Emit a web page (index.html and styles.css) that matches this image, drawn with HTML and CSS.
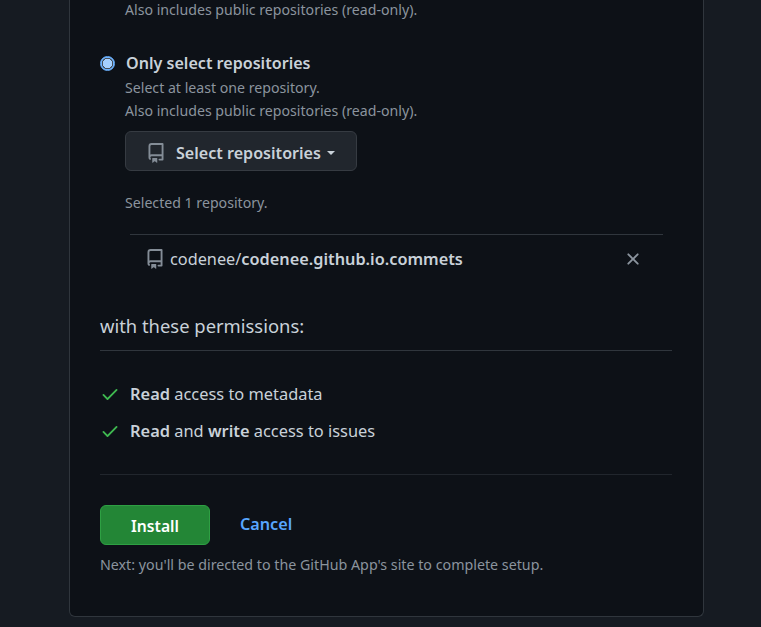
FILE: index.html
```html
<!DOCTYPE html>
<html lang="en">
<head>
    <meta charset="UTF-8">
    <title>Install GitHub App</title>
    <link rel="stylesheet" href="styles.css">
</head>
<body>
    <div class="card">
        <div class="note first-note">Also includes public repositories (read-only).</div>

        <div class="radio-row">
            <span class="radio"></span>
            <span class="radio-title">Only select repositories</span>
        </div>
        <div class="radio-body">
            <div class="note">Select at least one repository.</div>
            <div class="note">Also includes public repositories (read-only).</div>
            <button class="select-button">
                <svg class="repo-icon" viewBox="0 0 16 16"><path d="M2 2.5A2.5 2.5 0 0 1 4.5 0h8.75a.75.75 0 0 1 .75.75v12.5a.75.75 0 0 1-.75.75h-2.5a.75.75 0 0 1 0-1.5h1.75v-2h-8a1 1 0 0 0-.714 1.7.75.75 0 1 1-1.072 1.05A2.495 2.495 0 0 1 2 11.5Zm10.5-1h-8a1 1 0 0 0-1 1v6.708A2.486 2.486 0 0 1 4.5 9h8ZM5 12.25a.25.25 0 0 1 .25-.25h3.5a.25.25 0 0 1 .25.25v3.25a.25.25 0 0 1-.4.2l-1.45-1.087a.249.249 0 0 0-.3 0L5.4 15.7a.25.25 0 0 1-.4-.2Z"></path></svg>
                Select repositories
                <span class="caret"></span>
            </button>
            <div class="note selected-note">Selected 1 repository.</div>
            <div class="repo-row">
                <svg class="repo-icon" viewBox="0 0 16 16"><path d="M2 2.5A2.5 2.5 0 0 1 4.5 0h8.75a.75.75 0 0 1 .75.75v12.5a.75.75 0 0 1-.75.75h-2.5a.75.75 0 0 1 0-1.5h1.75v-2h-8a1 1 0 0 0-.714 1.7.75.75 0 1 1-1.072 1.05A2.495 2.495 0 0 1 2 11.5Zm10.5-1h-8a1 1 0 0 0-1 1v6.708A2.486 2.486 0 0 1 4.5 9h8ZM5 12.25a.25.25 0 0 1 .25-.25h3.5a.25.25 0 0 1 .25.25v3.25a.25.25 0 0 1-.4.2l-1.45-1.087a.249.249 0 0 0-.3 0L5.4 15.7a.25.25 0 0 1-.4-.2Z"></path></svg>
                <span class="repo-name">codenee/<strong>codenee.github.io.commets</strong></span>
                <svg class="remove-icon" viewBox="0 0 16 16"><path d="M3.72 3.72a.75.75 0 0 1 1.06 0L8 6.94l3.22-3.22a.749.749 0 0 1 1.275.326.749.749 0 0 1-.215.734L9.06 8l3.22 3.22a.749.749 0 0 1-.326 1.275.749.749 0 0 1-.734-.215L8 9.06l-3.22 3.22a.751.751 0 0 1-1.042-.018.751.751 0 0 1-.018-1.042L6.94 8 3.72 4.78a.75.75 0 0 1 0-1.06Z"></path></svg>
            </div>
        </div>

        <h2 class="section-title">with these permissions:</h2>
        <ul class="permissions">
            <li>
                <svg class="check-icon" viewBox="0 0 16 16"><path d="M13.78 4.22a.75.75 0 0 1 0 1.06l-7.25 7.25a.75.75 0 0 1-1.06 0L2.22 9.28a.751.751 0 0 1 .018-1.042.751.751 0 0 1 1.042-.018L6 10.94l6.72-6.72a.75.75 0 0 1 1.06 0Z"></path></svg>
                <span><strong>Read</strong> access to metadata</span>
            </li>
            <li>
                <svg class="check-icon" viewBox="0 0 16 16"><path d="M13.78 4.22a.75.75 0 0 1 0 1.06l-7.25 7.25a.75.75 0 0 1-1.06 0L2.22 9.28a.751.751 0 0 1 .018-1.042.751.751 0 0 1 1.042-.018L6 10.94l6.72-6.72a.75.75 0 0 1 1.06 0Z"></path></svg>
                <span><strong>Read</strong> and <strong>write</strong> access to issues</span>
            </li>
        </ul>

        <div class="actions">
            <button class="install-button">Install</button>
            <a class="cancel-link" href="#">Cancel</a>
        </div>
        <div class="note next-note">Next: you'll be directed to the GitHub App's site to complete setup.</div>
    </div>
</body>
</html>
```

FILE: styles.css
```css
html, body {
    height: 627px;
    overflow: hidden;
}
body {
    margin: 0;
    background: #161b22;
    color: #c9d1d9;
    font-family: 'Noto Sans', sans-serif;
    font-size: 16px;
}
strong {
    font-weight: 600;
}
.card {
    box-sizing: border-box;
    width: 635px;
    height: 617px;
    margin-left: 69px;
    padding: 0 31px 0 30px;
    background: #0d1117;
    border: 1px solid #30363d;
    border-top: none;
    border-radius: 0 0 6px 6px;
}
.note {
    color: #8b949e;
    font-size: 14.15px;
    line-height: 23px;
    white-space: nowrap;
}
.first-note {
    line-height: 19px;
    margin-left: 25px;
}
.radio-row {
    display: flex;
    align-items: center;
    height: 24px;
    margin-top: 32px;
}
.radio {
    box-sizing: border-box;
    width: 15px;
    height: 15px;
    margin-right: 11px;
    border-radius: 50%;
    border: 1px solid #6cb2ff;
    background: radial-gradient(circle, #a5d0ff 0 4.5px, #484f58 5px 5.5px, #6cb2ff 6px);
}
.radio-title {
    font-size: 16.1px;
    font-weight: 600;
    color: #c9d1d9;
}
.radio-body {
    padding-top: 1px;
    padding-left: 25px;
}
.select-button {
    display: flex;
    align-items: center;
    box-sizing: border-box;
    width: 232px;
    height: 40px;
    margin-top: 9px;
    padding: 3px 0 0 20px;
    background: #21262d;
    border: 1px solid #363b42;
    border-radius: 6px;
    color: #c9d1d9;
    font-family: inherit;
    font-size: 16.1px;
    font-weight: 600;
    white-space: nowrap;
}
.select-button .repo-icon {
    margin-right: 10px;
}
.repo-icon {
    width: 20px;
    height: 20px;
    fill: #848d97;
    flex: none;
}
.caret {
    width: 0;
    height: 0;
    margin-left: 6px;
    border: 4.5px solid transparent;
    border-top-color: #c9d1d9;
    border-bottom: none;
}
.selected-note {
    margin-top: 20px;
}
.repo-row {
    display: flex;
    align-items: center;
    height: 47px;
    margin: 20px 9px 0 5px;
    padding: 0 20px 0 15px;
    border-top: 1px solid #30363d;
}
.repo-name {
    flex: 1;
    margin-left: 5px;
    font-size: 16.3px;
    color: #c9d1d9;
}
.remove-icon {
    width: 20px;
    height: 20px;
    fill: #8b949e;
}
.section-title {
    margin: 0;
    margin-top: 23px;
    height: 46px;
    box-sizing: border-box;
    padding-top: 9px;
    border-bottom: 1px solid #30363d;
    font-size: 18.4px;
    font-weight: 400;
    line-height: 24px;
}
.permissions {
    list-style: none;
    margin: 0;
    padding: 24px 0 25px;
    border-bottom: 1px solid #21262d;
}
.permissions li {
    display: flex;
    align-items: center;
    height: 37px;
    font-size: 16.4px;
}
.check-icon {
    width: 20px;
    height: 20px;
    margin-right: 10px;
    fill: #3fb950;
}
.actions {
    display: flex;
    align-items: center;
    margin-top: 30px;
}
.install-button {
    width: 110px;
    height: 40px;
    background: #238636;
    border: 1px solid #2ea043;
    border-radius: 6px;
    color: #fff;
    font-family: inherit;
    font-size: 15.7px;
    font-weight: 600;
    padding: 1px 0 0;
}
.cancel-link {
    margin-left: 30px;
    margin-bottom: 2px;
    color: #58a6ff;
    font-size: 16.2px;
    font-weight: 600;
    text-decoration: none;
}
.next-note {
    margin-top: 8px;
    font-size: 14.25px;
}
```
